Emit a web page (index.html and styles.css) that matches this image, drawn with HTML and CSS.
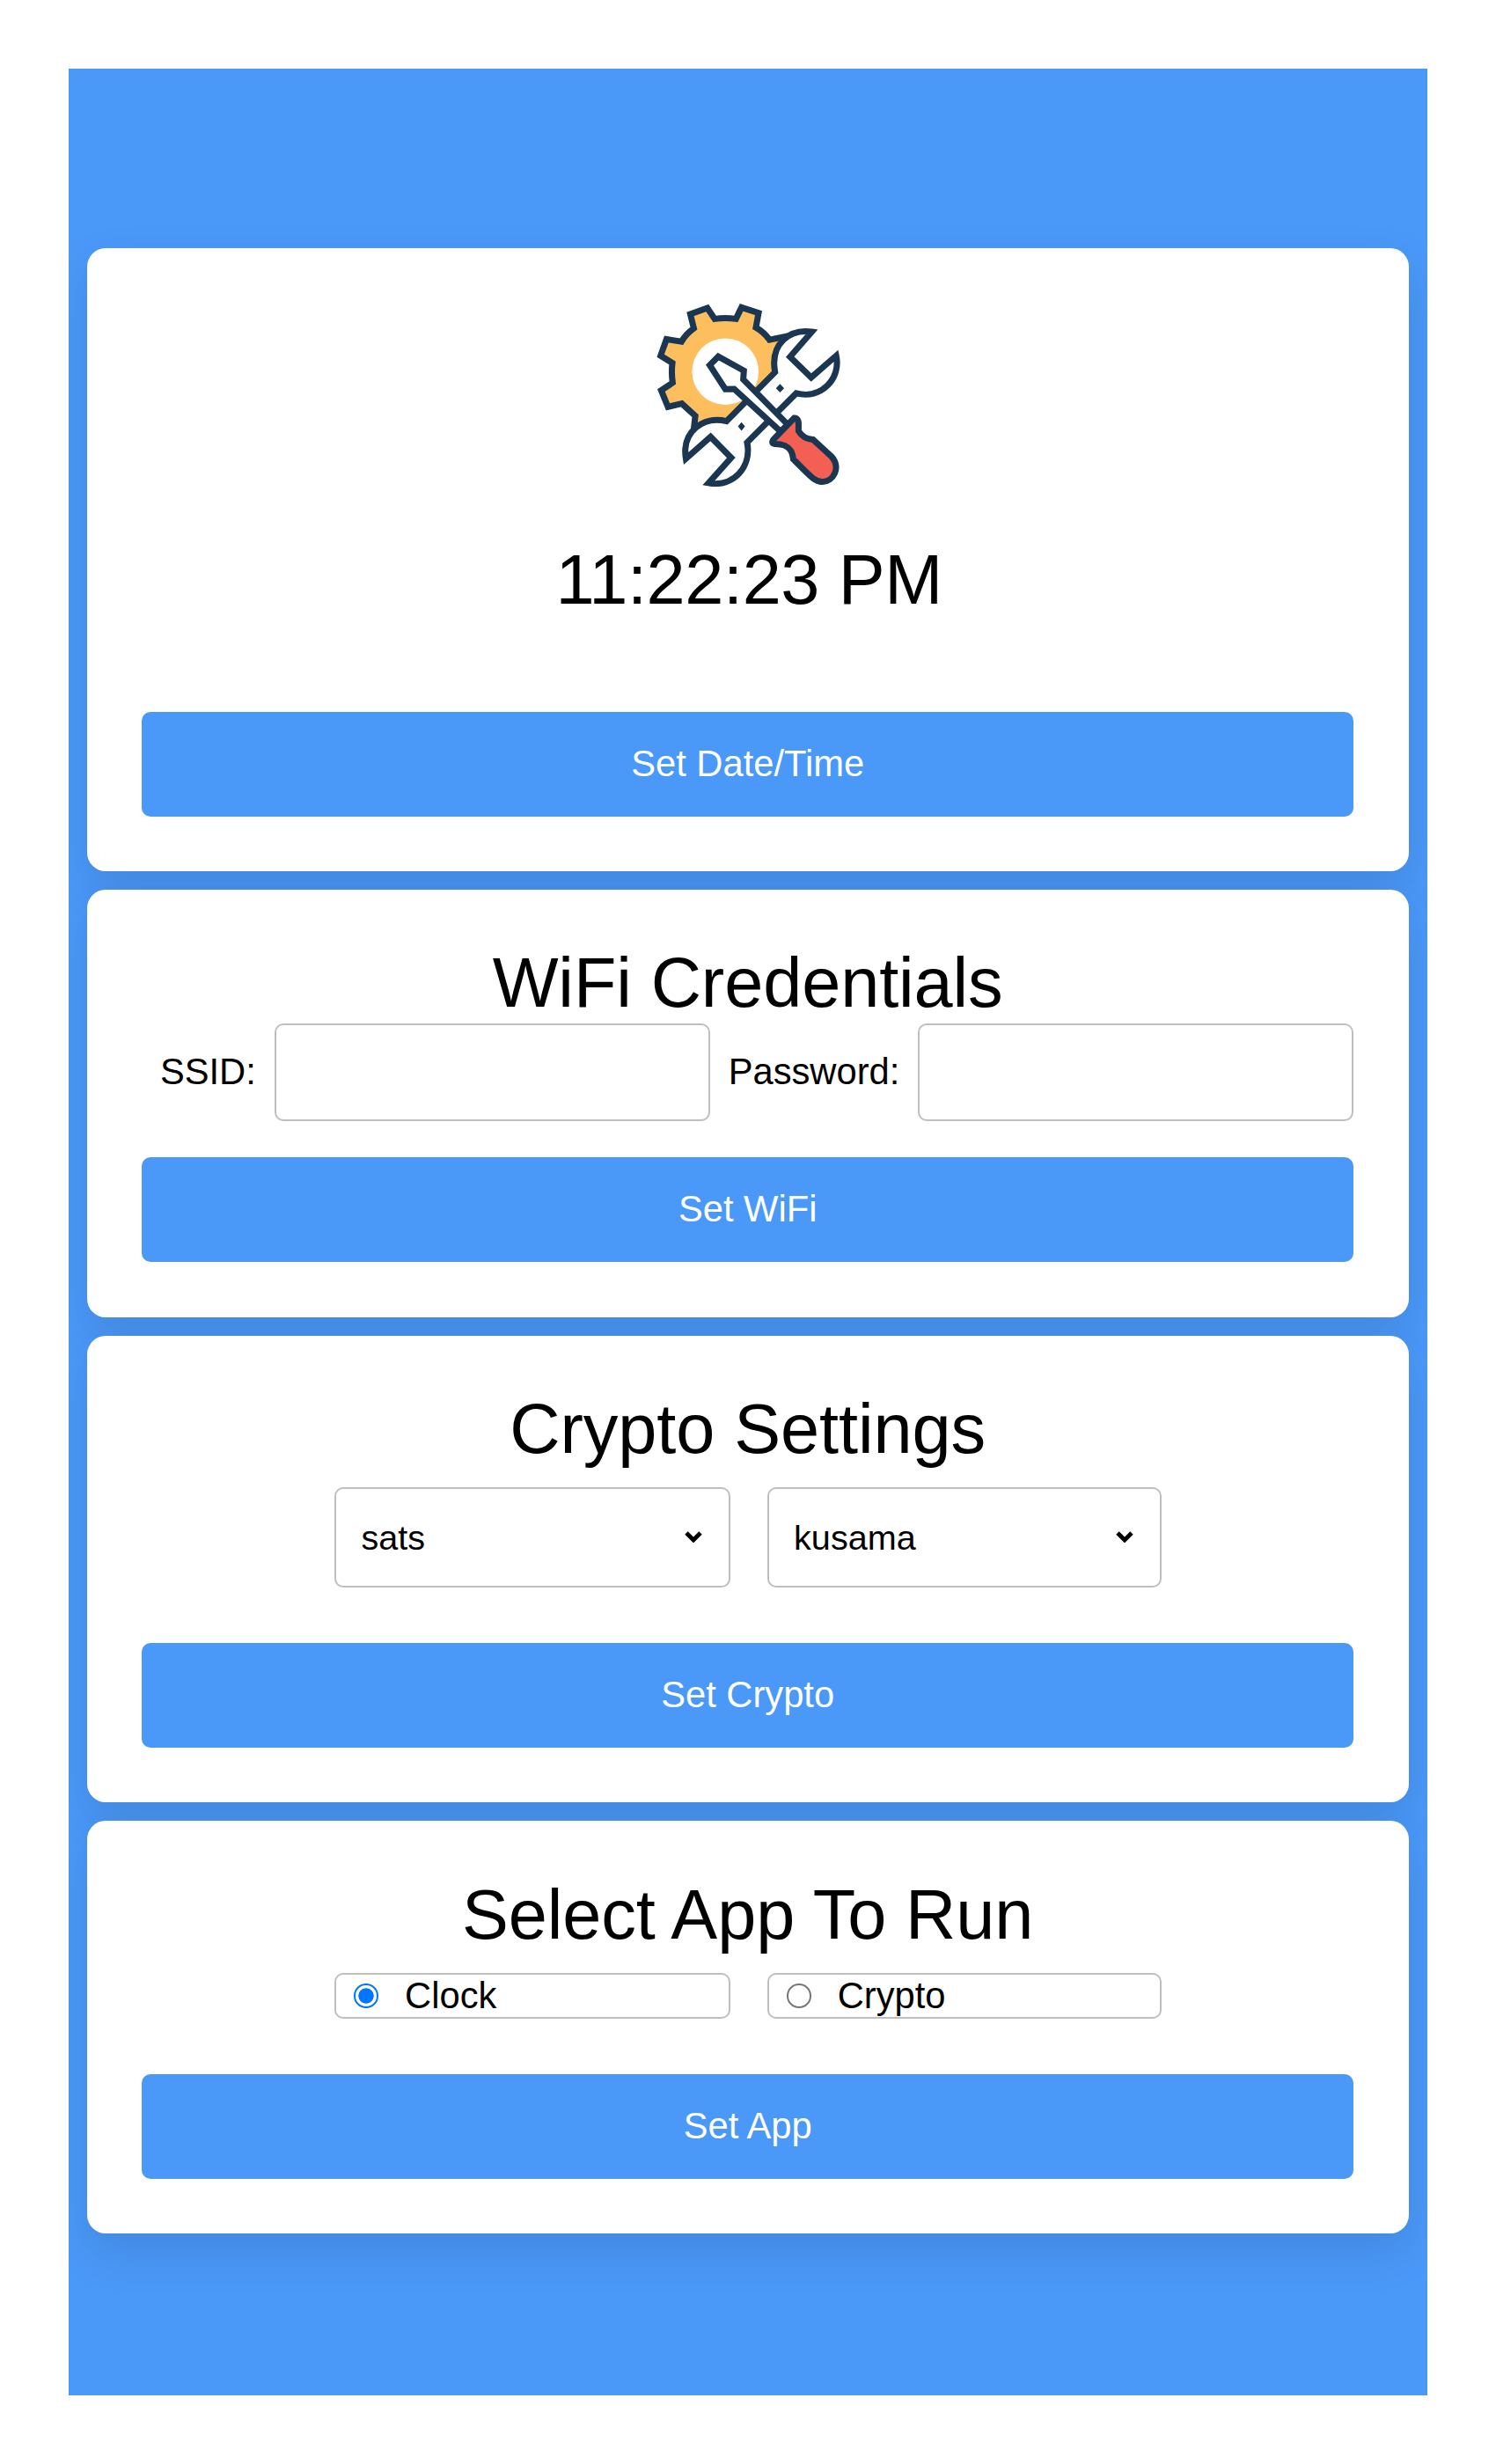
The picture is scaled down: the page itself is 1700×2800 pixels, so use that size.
FILE: index.html
```html
<!DOCTYPE html>
<html lang="en">
<head>
<meta charset="utf-8">
<title>Device Settings</title>
<link rel="stylesheet" href="styles.css">
</head>
<body>
<main class="panel">
  <section class="card card-clock">
    <svg class="logo" viewBox="80 72 624 624" fill="none" stroke="#1a3650" stroke-width="21" stroke-miterlimit="10">
      <path fill="#fdbf5e" d="M208 492 L212 457 L166 415 L119 426 L96 370 L135 344 Q130 310 134 277 L94 252 L114 196 L165 204 Q180 178 207 159 L195 111 L253 90 L278 127 Q314 122 350 127 L369 88 L427 107 L418 156 Q446 172 464 198 L517 187 L490 320 L320 480 Z"/>
      <circle cx="314" cy="306" r="113" fill="#fff" stroke="none"/>
      <path fill="#fff" d="M608 171 C535 160 465 210 483 308 L318 475 C240 455 165 510 180 602 L264 528 L334 599 L257 685 C340 700 405 632 388 547 L555 380 C640 402 708 330 691 252 L606 326 L534 256 Z"/>
      <path fill="#1a3650" stroke="none" d="M500 348 L514 363 L500 377 L486 363 Z M369 478 L381 492 L369 507 L357 492 Z"/>
      <path fill="#fff" d="M502 510 L344 365 L314 366 L261 284 L290 255 L377 303 L375 333 L526 486 Z"/>
      <path fill="#f35f52" d="M548 464 C568 464 562 488 563 508 Q579 535 612 537 L674 594 C710 632 680 682 643 681 C618 680 607 666 545 604 C542 572 528 552 482 552 C468 551 475 538 484 530 Z"/>
    </svg>
    <div class="time">11:22:23 PM</div>
    <button class="btn">Set Date/Time</button>
  </section>

  <section class="card card-wifi">
    <h1 class="title">WiFi Credentials</h1>
    <div class="fields">
      <label class="label" for="ssid">SSID:</label>
      <input class="field" id="ssid" type="text">
      <label class="label" for="password">Password:</label>
      <input class="field" id="password" type="password">
    </div>
    <button class="btn">Set WiFi</button>
  </section>

  <section class="card card-crypto">
    <h1 class="title">Crypto Settings</h1>
    <div class="pair">
      <div class="picker">
        <select class="select"><option>sats</option></select>
        <svg class="chevron" viewBox="0 0 20 13"><path d="M2 2 L10 10 L18 2"/></svg>
      </div>
      <div class="picker">
        <select class="select"><option>kusama</option></select>
        <svg class="chevron" viewBox="0 0 20 13"><path d="M2 2 L10 10 L18 2"/></svg>
      </div>
    </div>
    <button class="btn">Set Crypto</button>
  </section>

  <section class="card card-app">
    <h1 class="title">Select App To Run</h1>
    <div class="pair">
      <label class="choice"><input class="radio" type="radio" name="app" checked>Clock</label>
      <label class="choice"><input class="radio" type="radio" name="app">Crypto</label>
    </div>
    <button class="btn">Set App</button>
  </section>
</main>
</body>
</html>
```
FILE: styles.css
```css
* { box-sizing: border-box; }

body {
  margin: 0;
  padding: 77.7px 78.4px 77.7px 77.6px;
  background: #fff;
  color: #000;
  font-family: "Liberation Sans", Arial, sans-serif;
  font-size: 41.7px;
}

.panel {
  height: 2644px;
  padding: 204px 20.9px 0 21px;
  display: flex;
  flex-direction: column;
  gap: 20.9px;
  background: #4a98f8;
  overflow: hidden;
}

.card {
  flex: none;
  display: flex;
  flex-direction: column;
  padding: 62.4px;
  border-radius: 21px;
  background: #fff;
  box-shadow: 0 21px 52px rgba(0, 0, 0, .1);
}

.card-clock { height: 708.5px; }
.card-wifi { height: 485.7px; }
.card-crypto { height: 530.8px; }
.card-app { height: 468.9px; }

.logo {
  width: 208.6px;
  height: 208.6px;
  margin-left: 2px;
  align-self: center;
}

.time {
  margin-top: 61px;
  padding-left: 3px;
  font-size: 79.3px;
  line-height: 90px;
  letter-spacing: -.4px;
  text-align: center;
}

.title {
  margin: 0;
  font-size: 79.3px;
  font-weight: 400;
  line-height: 87px;
  letter-spacing: -.1px;
  text-align: center;
}

.btn {
  height: 119px;
  margin-top: auto;
  padding: 0 0 1px;
  border: 0;
  border-radius: 10px;
  background: #4a98f8;
  color: #fff;
  font: inherit;
}

.fields {
  margin-top: 2.4px;
  display: flex;
  align-items: center;
  gap: 20.9px;
  padding-left: 20.9px;
}

.label { padding-bottom: 1px; white-space: nowrap; }

.field {
  flex: 1;
  min-width: 0;
  height: 111px;
  border: 2px solid #bfbfbf;
  border-radius: 10px;
  background: #fff;
  font: inherit;
}

.pair {
  width: 940px;
  margin: 23.4px 0 0 219px;
  display: grid;
  grid-template-columns: 450px 448px;
  gap: 41.6px;
}

.picker { display: grid; align-items: center; }

.picker > * { grid-area: 1 / 1; }

.select {
  appearance: none;
  width: 100%;
  height: 114px;
  padding: 0 28.5px 1px;
  border: 2px solid #bfbfbf;
  border-radius: 10px;
  background: #fff;
  color: #000;
  font: inherit;
  font-size: 39.6px;
}

.chevron {
  width: 20px;
  height: 13px;
  margin: 0 32px 1px 0;
  justify-self: end;
  fill: none;
  stroke: #000;
  stroke-width: 4.8;
}

.choice {
  height: 52px;
  padding: 0 0 1px 20.5px;
  display: flex;
  align-items: center;
  gap: 30px;
  border: 2px solid #bfbfbf;
  border-radius: 10px;
  line-height: 46px;
}

.radio {
  appearance: none;
  width: 27.6px;
  height: 27.6px;
  margin: 1px 0 0;
  border: 2px solid #767676;
  border-radius: 50%;
}

.radio:checked {
  border-color: #0075ff;
  background: radial-gradient(circle, #0075ff 8.3px, #fff 9px);
}
```
